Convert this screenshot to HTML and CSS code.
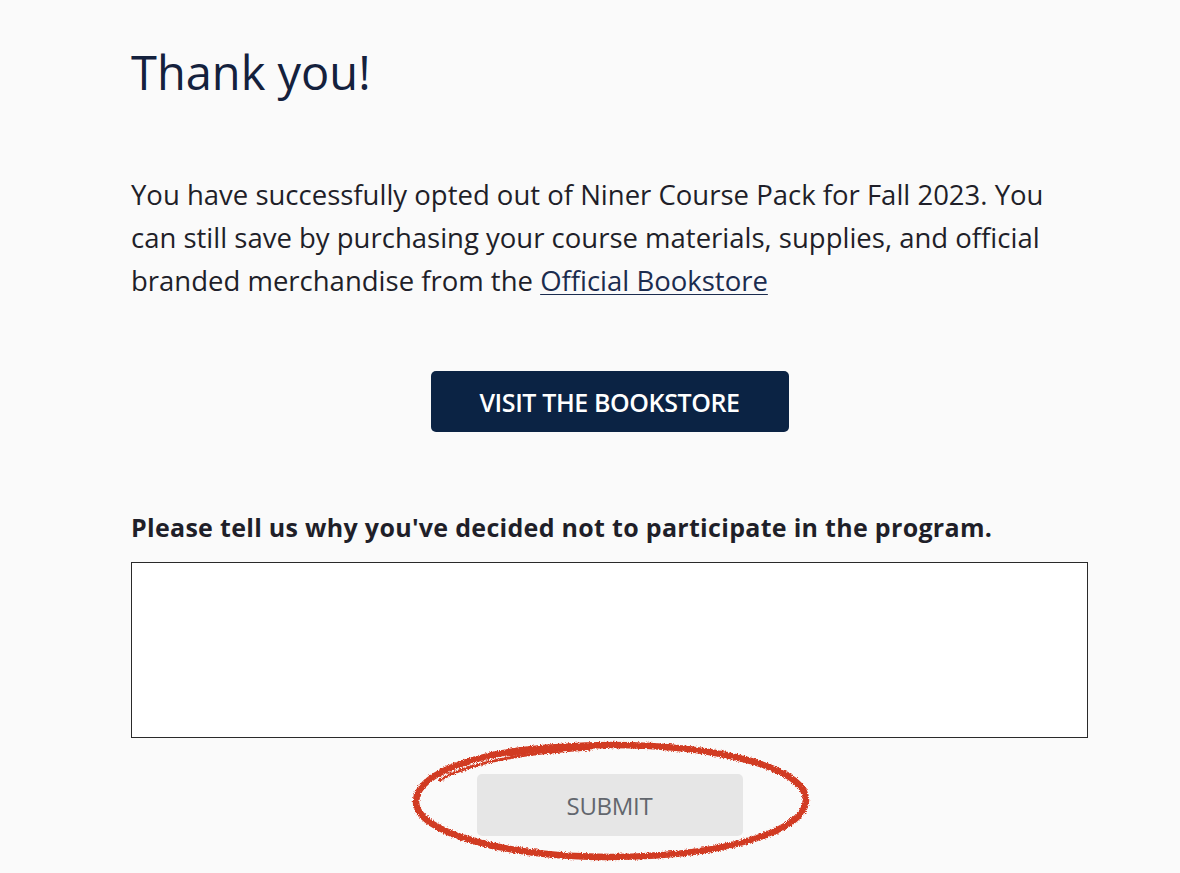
FILE: index.html
```html
<!DOCTYPE html>
<html lang="en">
<head>
<meta charset="utf-8">
<title>Thank you</title>
<link rel="stylesheet" href="styles.css">
</head>
<body>
<main class="page">
  <h1 class="title">Thank you!</h1>
  <p class="message">You have successfully opted out of Niner Course Pack for Fall 2023. You can still save by purchasing your course materials, supplies, and official branded merchandise from the <a href="#" class="link">Official Bookstore</a></p>
  <div class="center">
    <a href="#" class="btn-primary">VISIT THE BOOKSTORE</a>
  </div>
  <form class="feedback">
    <label class="label" for="reason">Please tell us why you've decided not to participate in the program.</label>
    <textarea id="reason" class="reason"></textarea>
    <div class="center submit-wrap">
      <button type="button" class="btn-submit">SUBMIT</button>
      <svg class="scribble" viewBox="0 0 402 124" width="402" height="124" aria-hidden="true">
        <defs>
          <filter id="rough" x="-5%" y="-15%" width="110%" height="130%">
            <feTurbulence type="fractalNoise" baseFrequency="1.4" numOctaves="2" seed="7" result="n"/>
            <feDisplacementMap in="SourceGraphic" in2="n" scale="4" xChannelSelector="R" yChannelSelector="G"/>
          </filter>
        </defs>
        <g filter="url(#rough)" fill="none" stroke="#d13a22" stroke-linecap="round">
          <path d="M150 7 C 80 10, 6 30, 6 62 C 6 92, 93 117, 201 117 C 309 117, 396 92, 396 60 C 396 28, 309 5, 201 5 C 160 5, 125 9, 100 13" stroke-width="6.5"/>
          <path d="M30 40 C 60 22, 120 12, 180 9" stroke-width="3"/>
          <path d="M240 114 C 300 112, 360 98, 385 80" stroke-width="2.5"/>
        </g>
      </svg>
    </div>
  </form>
</main>
</body>
</html>
```

FILE: styles.css
```css
html, body {
  margin: 0;
  padding: 0;
  background: #fafafa;
}

body {
  font-family: "Open Sans", "Liberation Sans", Arial, sans-serif;
  color: #1f1f29;
}

.page {
  width: 957px;
  margin-left: 131px;
  padding-top: 40px;
  padding-bottom: 60px;
}

.title {
  margin: 0;
  font-size: 47px;
  font-weight: 400;
  line-height: 64px;
  color: #14213d;
  letter-spacing: 0;
}

.message {
  margin: 69px 0 0;
  font-size: 27.5px;
  line-height: 43px;
  color: #1f1f29;
  width: 930px;
}

.link {
  color: #1b2c4f;
  text-decoration: underline;
  text-underline-offset: 3px;
  text-decoration-thickness: 1px;
}

.center {
  display: flex;
  justify-content: center;
}

.btn-primary {
  margin-top: 69px;
  display: flex;
  align-items: center;
  justify-content: center;
  width: 358px;
  height: 61px;
  box-sizing: border-box;
  background: #0b2344;
  color: #ffffff;
  border-radius: 5px;
  text-decoration: none;
  font-size: 25px;
  font-weight: 600;
  letter-spacing: -0.4px;
}

.feedback {
  display: flex;
  flex-direction: column;
  margin-top: 79px;
}

.label {
  font-size: 25px;
  font-weight: 700;
  line-height: 32px;
  color: #1f1f29;
  letter-spacing: 0.3px;
}

.reason {
  margin-top: 19px;
  width: 957px;
  height: 176px;
  box-sizing: border-box;
  border: 1.5px solid #2a2a2a;
  background: #ffffff;
  resize: none;
  font: inherit;
}

.submit-wrap {
  position: relative;
  margin-top: 36px;
}

.btn-submit {
  width: 266px;
  height: 62px;
  border: none;
  border-radius: 5px;
  background: #e6e6e6;
  color: #62666d;
  font-family: "Open Sans", "Liberation Sans", Arial, sans-serif;
  font-size: 24px;
  font-weight: 400;
  letter-spacing: -0.3px;
}

.scribble {
  position: absolute;
  left: 279px;
  top: -34px;
  pointer-events: none;
}
```
